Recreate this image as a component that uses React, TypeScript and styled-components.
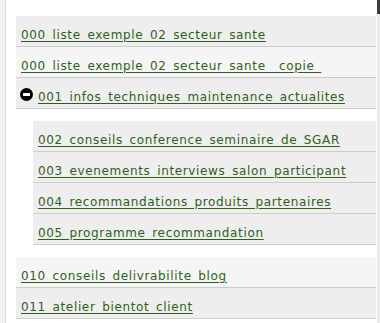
import React from "react";
import styled, { createGlobalStyle } from "styled-components";

const GlobalStyle = createGlobalStyle`
  html, body {
    margin: 0;
    padding: 0;
    background: #ffffff;
  }
  body {
    font-family: "DejaVu Sans", Verdana, sans-serif;
  }
`;

const StyledPage = styled.div`
  display: flex;
  width: 380px;
  height: 323px;
  overflow: hidden;
  background: #ffffff;
`;

const StyledSideStrip = styled.div`
  width: 5px;
  flex: none;
  background: #f2f2f2;
  border-right: 1px solid #dcdcdc;
`;

const StyledMain = styled.div`
  flex: 1;
  padding: 16px 0 0 10px;
`;

const StyledScroll = styled.div`
  width: 3px;
  flex: none;
  margin-left: 1px;
  background: linear-gradient(#3c3c3c 0 14px, #ebebeb 14px);
`;

const StyledList = styled.ul<{ $nested?: boolean }>`
  list-style: none;
  margin: ${(p) => (p.$nested ? "12px 0 12px 17px" : "0")};
  padding: 0;
`;

const StyledRow = styled.li<{ $light?: boolean }>`
  display: flex;
  align-items: center;
  height: 30px;
  padding-left: 5px;
  background: ${(p) => (p.$light ? "#f5f5f5" : "#eeeeee")};
  border-bottom: 1px solid #cccccc;
`;

const StyledLink = styled.a`
  color: #2f5f1c;
  font-size: 12px;
  letter-spacing: 0.65px;
  text-decoration: underline;
  text-underline-offset: 2px;
  white-space: nowrap;
  padding-top: 7px;
`;

const StyledToggle = styled.span`
  width: 13px;
  height: 13px;
  flex: none;
  margin: 3px 5px 0 -1px;
  border-radius: 50%;
  background: #000000;
  display: flex;
  align-items: center;
  justify-content: center;
  &::after {
    content: "";
    width: 7px;
    height: 3px;
    background: #ffffff;
  }
`;

const top = [
  "000_liste_exemple_02_secteur_sante",
  "000_liste_exemple_02_secteur_sante__copie_",
];

const children = [
  "002_conseils_conference_seminaire_de_SGAR",
  "003_evenements_interviews_salon_participant",
  "004_recommandations_produits_partenaires",
  "005_programme_recommandation",
];

const bottom = ["010_conseils_delivrabilite_blog", "011_atelier_bientot_client"];

export default function App() {
  return (
    <>
      <GlobalStyle />
      <StyledPage>
        <StyledSideStrip />
        <StyledMain>
          <StyledList>
            {top.map((t, i) => (
              <StyledRow key={t} $light={i % 2 === 1}>
                <StyledLink href="#">{t}</StyledLink>
              </StyledRow>
            ))}
            <StyledRow>
              <StyledToggle />
              <StyledLink href="#">001_infos_techniques_maintenance_actualites</StyledLink>
            </StyledRow>
          </StyledList>
          <StyledList $nested>
            {children.map((t) => (
              <StyledRow key={t}>
                <StyledLink href="#">{t}</StyledLink>
              </StyledRow>
            ))}
          </StyledList>
          <StyledList>
            {bottom.map((t, i) => (
              <StyledRow key={t} $light={i % 2 === 0}>
                <StyledLink href="#">{t}</StyledLink>
              </StyledRow>
            ))}
          </StyledList>
        </StyledMain>
        <StyledScroll />
      </StyledPage>
    </>
  );
}
